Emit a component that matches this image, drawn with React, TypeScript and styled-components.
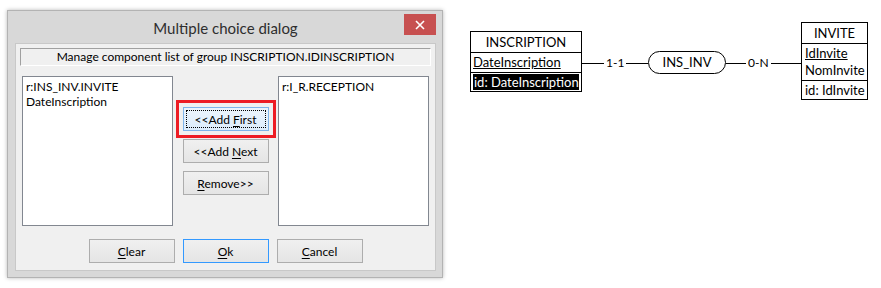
import * as React from 'react';
import styled, { createGlobalStyle, css } from 'styled-components';

const GlobalStyle = createGlobalStyle`
  html, body {
    margin: 0;
    padding: 0;
    background: #fff;
  }
  body {
    width: 881px;
    height: 288px;
    overflow: hidden;
    font-family: 'Lato', 'Liberation Sans', sans-serif;
  }
`;

const Page = styled.div`
  display: flex;
  align-items: flex-start;
  padding: 10px 0 0 7px;
`;

const Window = styled.div`
  width: 436px;
  height: 268px;
  box-sizing: border-box;
  display: flex;
  flex-direction: column;
  padding: 0 6px 6px 7px;
  background: #d8d8d8;
  border: 1px solid #b3b3b3;
  box-shadow: 0 0 4px rgba(0, 0, 0, 0.28);
`;

const TitleBar = styled.div`
  height: 32px;
  flex: none;
  display: grid;
  grid-template-columns: 1fr auto 1fr;
`;

const Title = styled.div`
  grid-column: 2;
  align-self: center;
  padding-top: 2px;
  font-size: 15px;
  color: #2e2e2e;
  white-space: nowrap;
`;

const CloseButton = styled.div`
  grid-column: 3;
  justify-self: end;
  margin-top: 3px;
  width: 32px;
  height: 21px;
  background: #c75050;
  display: flex;
  align-items: center;
  justify-content: center;
`;

const Client = styled.div`
  flex: 1;
  display: flex;
  flex-direction: column;
  padding: 4px 4px 0;
  background: #f0f0f0;
  border: 1px solid #c8c8c8;
`;

const Caption = styled.div`
  height: 18px;
  box-sizing: border-box;
  border: 1px solid;
  border-color: #a0a0a0 #ffffff #ffffff #a0a0a0;
  text-align: center;
  font-size: 12px;
  line-height: 16px;
  color: #000;
`;

const ListsRow = styled.div`
  margin: 10px 2px 0;
  height: 150px;
  display: grid;
  grid-template-columns: 151px 1fr 151px;
`;

const ListBox = styled.div`
  box-sizing: border-box;
  border: 1px solid #828790;
  background: #fff;
  padding: 2px 3px;
  font-size: 12px;
  line-height: 15px;
  color: #000;
  white-space: nowrap;
`;

const MoveColumn = styled.div`
  display: flex;
  flex-direction: column;
  align-items: center;
  gap: 8px;
  padding-top: 31px;
`;

const ButtonRow = styled.div`
  margin-top: 13px;
  display: flex;
  justify-content: center;
  gap: 8px;
`;

const Button = styled.button<{ $focused?: boolean; $default?: boolean; $marked?: boolean }>`
  position: relative;
  width: 86px;
  height: 24px;
  box-sizing: border-box;
  padding: 0;
  font-family: 'Lato', 'Liberation Sans', sans-serif;
  font-size: 12px;
  color: #000;
  border: 1px solid #adadad;
  border-radius: 0;
  background: linear-gradient(#f0f0f0, #e5e5e5);

  u {
    text-decoration: underline;
    text-underline-offset: 2px;
  }

  ${(p) =>
    p.$default &&
    css`
      border-color: #3399ff;
    `}

  ${(p) =>
    p.$focused &&
    css`
      border-color: #7eb4ea;
      background: linear-gradient(#ecf4fc, #dcecfc);
      &::after {
        content: '';
        position: absolute;
        inset: 2px;
        border: 1px dotted #000;
      }
    `}

  ${(p) =>
    p.$marked &&
    css`
      outline: 3px solid #ed1c24;
      outline-offset: 4px;
    `}
`;

const Diagram = styled.div`
  display: flex;
  align-items: center;
  margin: 12px 0 0 27px;
  font-family: 'Lato', 'Liberation Sans', sans-serif;
  font-size: 13px;
  color: #000;
`;

const Entity = styled.div<{ $width: number }>`
  width: ${(p) => p.$width}px;
  box-sizing: border-box;
  border: 1px solid #000;
  background: #fff;
`;

const EntityName = styled.div`
  height: 20px;
  line-height: 20px;
  text-align: center;
  border-bottom: 1px solid #000;
`;

const Section = styled.div<{ $pad: number; $last?: boolean }>`
  padding: 1px ${(p) => p.$pad}px;
  line-height: 17px;
  white-space: nowrap;
  border-bottom: ${(p) => (p.$last ? 'none' : '1px solid #000')};
`;

const Key = styled.span`
  text-decoration: underline;
`;

const IdLine = styled.div<{ $selected?: boolean }>`
  line-height: 16px;
  ${(p) =>
    p.$selected &&
    css`
      background: #000;
      color: #fff;
      padding-left: 1px;
    `}
`;

const Connector = styled.div<{ $width: number; $labelAt: number }>`
  width: ${(p) => p.$width}px;
  margin-top: 4px;
  display: grid;
  grid-template-columns: ${(p) => p.$labelAt}px auto 1fr;
  align-items: center;
  column-gap: 2px;

  &::before,
  &::after {
    content: '';
    height: 1px;
    background: #000;
  }
  &::after {
    grid-column: 3;
  }
`;

const Cardinality = styled.span`
  grid-column: 2;
  font-size: 12px;
  line-height: 14px;
`;

const Relation = styled.div`
  width: 78px;
  height: 23px;
  margin-top: 2px;
  box-sizing: border-box;
  border: 1px solid #000;
  border-radius: 12px;
  background: #fff;
  display: flex;
  align-items: center;
  justify-content: center;
`;

function CloseIcon() {
  return (
    <svg width="10" height="10" viewBox="0 0 10 10">
      <path d="M1 1 L9 9 M9 1 L1 9" stroke="#fff" strokeWidth="1.6" />
    </svg>
  );
}

export default function App() {
  return (
    <>
      <GlobalStyle />
      <Page>
        <Window>
          <TitleBar>
            <Title>Multiple choice dialog</Title>
            <CloseButton>
              <CloseIcon />
            </CloseButton>
          </TitleBar>
          <Client>
            <Caption>Manage component list of group INSCRIPTION.IDINSCRIPTION</Caption>
            <ListsRow>
              <ListBox>
                <div>r:INS_INV.INVITE</div>
                <div>DateInscription</div>
              </ListBox>
              <MoveColumn>
                <Button $focused $marked>
                  &lt;&lt;Add <u>F</u>irst
                </Button>
                <Button>
                  &lt;&lt;Add <u>N</u>ext
                </Button>
                <Button>
                  <u>R</u>emove&gt;&gt;
                </Button>
              </MoveColumn>
              <ListBox>
                <div>r:I_R.RECEPTION</div>
              </ListBox>
            </ListsRow>
            <ButtonRow>
              <Button>
                <u>C</u>lear
              </Button>
              <Button $default>
                <u>O</u>k
              </Button>
              <Button>
                <u>C</u>ancel
              </Button>
            </ButtonRow>
          </Client>
        </Window>

        <Diagram>
          <Entity $width={112}>
            <EntityName>INSCRIPTION</EntityName>
            <Section $pad={2}>
              <Key>DateInscription</Key>
            </Section>
            <Section $pad={2} $last>
              <IdLine $selected>id: DateInscription</IdLine>
            </Section>
          </Entity>
          <Connector $width={66} $labelAt={22}>
            <Cardinality>1-1</Cardinality>
          </Connector>
          <Relation>INS_INV</Relation>
          <Connector $width={75} $labelAt={20}>
            <Cardinality>0-N</Cardinality>
          </Connector>
          <Entity $width={67}>
            <EntityName>INVITE</EntityName>
            <Section $pad={3}>
              <Key>IdInvite</Key>
              <div>NomInvite</div>
            </Section>
            <Section $pad={3} $last>
              <IdLine>id: IdInvite</IdLine>
            </Section>
          </Entity>
        </Diagram>
      </Page>
    </>
  );
}
